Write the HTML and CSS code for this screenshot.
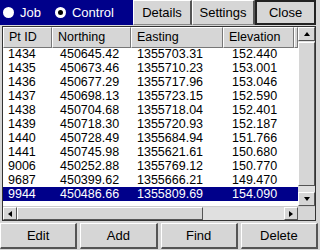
FILE: index.html
```html
<!DOCTYPE html>
<html lang="en">
<head>
    <meta charset="UTF-8">
    <meta name="viewport" content="width=device-width, initial-scale=1.0">
    <title>Control Points</title>
    <link rel="stylesheet" href="styles.css">
</head>
<body>
    <div class="topbar">
        <div class="mode">
            <label class="radio"><span class="dot"></span>Job</label>
            <label class="radio"><span class="dot checked"></span>Control</label>
        </div>
        <div class="tab">Details</div>
        <div class="tab">Settings</div>
        <div class="tab active">Close</div>
    </div>

    <div class="list">
        <div class="list-body">
            <div class="table">
                <div class="row head">
                    <div class="cell c1">Pt ID</div>
                    <div class="cell c2">Northing</div>
                    <div class="cell c3">Easting</div>
                    <div class="cell c4">Elevation</div>
                    <div class="cell c5"></div>
                </div>
                <div class="row"><div class="c1">1434</div><div class="c2">450645.42</div><div class="c3">1355703.31</div><div class="c4">152.440</div></div>
                <div class="row"><div class="c1">1435</div><div class="c2">450673.46</div><div class="c3">1355710.23</div><div class="c4">153.001</div></div>
                <div class="row"><div class="c1">1436</div><div class="c2">450677.29</div><div class="c3">1355717.96</div><div class="c4">153.046</div></div>
                <div class="row"><div class="c1">1437</div><div class="c2">450698.13</div><div class="c3">1355723.15</div><div class="c4">152.590</div></div>
                <div class="row"><div class="c1">1438</div><div class="c2">450704.68</div><div class="c3">1355718.04</div><div class="c4">152.401</div></div>
                <div class="row"><div class="c1">1439</div><div class="c2">450718.30</div><div class="c3">1355720.93</div><div class="c4">152.187</div></div>
                <div class="row"><div class="c1">1440</div><div class="c2">450728.49</div><div class="c3">1355684.94</div><div class="c4">151.766</div></div>
                <div class="row"><div class="c1">1441</div><div class="c2">450745.98</div><div class="c3">1355621.61</div><div class="c4">150.680</div></div>
                <div class="row"><div class="c1">9006</div><div class="c2">450252.88</div><div class="c3">1355769.12</div><div class="c4">150.770</div></div>
                <div class="row"><div class="c1">9687</div><div class="c2">450399.62</div><div class="c3">1355666.21</div><div class="c4">149.470</div></div>
                <div class="row selected"><div class="c1">9944</div><div class="c2">450486.66</div><div class="c3">1355809.69</div><div class="c4">154.090</div></div>
            </div>
            <div class="vscroll">
                <div class="arrow"><span class="tri up"></span></div>
                <div class="vthumb"></div>
                <div class="vtrack"></div>
                <div class="arrow"><span class="tri down"></span></div>
            </div>
        </div>
        <div class="hscroll">
            <div class="arrow h"><span class="tri left"></span></div>
            <div class="hthumb"></div>
            <div class="htrack"></div>
            <div class="arrow h"><span class="tri right"></span></div>
            <div class="corner"></div>
        </div>
    </div>

    <div class="buttons">
        <button class="btn">Edit</button>
        <button class="btn">Add</button>
        <button class="btn">Find</button>
        <button class="btn">Delete</button>
    </div>
</body>
</html>
```

FILE: styles.css
```css
body {
    margin: 0;
    width: 320px;
    height: 250px;
    overflow: hidden;
    background: #d6d6d6;
    font-family: "Liberation Sans", Arial, sans-serif;
    font-size: 12.5px;
    color: #000;
}

.topbar {
    display: flex;
    height: 25px;
}

.mode {
    width: 133px;
    background: #00008a;
    color: #fff;
    font-size: 13px;
    display: flex;
    align-items: center;
    padding-left: 3px;
    box-sizing: border-box;
}

.radio {
    display: flex;
    align-items: center;
    margin-right: 14px;
}

.dot {
    width: 11px;
    height: 11px;
    border-radius: 50%;
    background: #fff;
    margin-right: 6px;
    position: relative;
}

.dot.checked::after {
    content: "";
    position: absolute;
    left: 3px;
    top: 3px;
    width: 5px;
    height: 5px;
    border-radius: 50%;
    background: #000;
}

.tab {
    font-size: 13px;
    display: flex;
    align-items: center;
    justify-content: center;
    background: #d6d6d6;
    border-top: 1px solid #fff;
    border-left: 1px solid #fff;
    border-right: 2px solid #555;
    border-bottom: 1px solid #888;
    box-sizing: border-box;
}

.tab:nth-child(2) { width: 59px; }
.tab:nth-child(3) { width: 63px; }

.tab.active {
    width: 61px;
    border: 2px solid #222;
}

.list {
    margin: 1px 4px 0 2px;
    border: 1px solid #333;
    background: #fff;
}

.list-body {
    display: flex;
    height: 179px;
}

.table {
    flex: 1;
}

.row {
    display: grid;
    grid-template-columns: 49px 79px 92px 71px 1fr;
    height: 14px;
    line-height: 14px;
    white-space: nowrap;
}

.row.head {
    height: 19px;
    line-height: 19px;
    margin-bottom: 1px;
}

.head .cell {
    background: #d6d6d6;
    border-top: 1px solid #fff;
    border-left: 1px solid #fff;
    border-right: 1px solid #777;
    border-bottom: 1px solid #777;
    padding-left: 4px;
    box-sizing: border-box;
}

.head .c5 { padding: 0; }

.row .c1 { padding-left: 5px; }
.row .c2 { padding-left: 8px; }
.row .c3 { padding-left: 6px; }
.row .c4 { padding-left: 9px; }

.head .c2 { padding-left: 5px; }
.head .c3 { padding-left: 5px; }
.head .c4 { padding-left: 5px; }

.row.selected {
    background: #00008a;
    color: #fff;
}

.vscroll {
    width: 17px;
    background: #e0e0e0;
    display: flex;
    flex-direction: column;
}

.arrow {
    height: 14px;
    background: #d6d6d6;
    border-top: 1px solid #fff;
    border-left: 1px solid #fff;
    border-right: 1px solid #555;
    border-bottom: 1px solid #555;
    box-sizing: border-box;
    display: flex;
    align-items: center;
    justify-content: center;
    flex: none;
}

.arrow.h {
    width: 14px;
    height: 13px;
}

.vthumb {
    flex: 1;
    background: #d6d6d6;
    border-top: 1px solid #fff;
    border-left: 1px solid #fff;
    border-right: 1px solid #555;
    border-bottom: 1px solid #555;
    margin-top: 1px;
}

.vtrack {
    height: 6px;
}

.tri {
    width: 0;
    height: 0;
    border: 3px solid transparent;
}

.tri.up { border-bottom: 4px solid #000; border-top: 0; }
.tri.down { border-top: 4px solid #000; border-bottom: 0; }
.tri.left { border-right: 4px solid #000; border-left: 0; }
.tri.right { border-left: 4px solid #000; border-right: 0; }

.hscroll {
    display: flex;
    height: 13px;
    background: #e0e0e0;
    border-top: 1px solid #ccc;
}

.hthumb {
    width: 186px;
    background: #d6d6d6;
    border-top: 1px solid #fff;
    border-left: 1px solid #fff;
    border-right: 1px solid #555;
    border-bottom: 1px solid #555;
    box-sizing: border-box;
}

.htrack {
    flex: 1;
}

.corner {
    width: 17px;
    background: #d6d6d6;
}

.buttons {
    display: flex;
    gap: 3px;
    margin-top: 2px;
    padding-right: 2px;
}

.btn {
    flex: 1;
    height: 26px;
    font-family: "Liberation Sans", Arial, sans-serif;
    font-size: 13px;
    background: #d6d6d6;
    border-top: 1px solid #fff;
    border-left: 1px solid #fff;
    border-right: 2px solid #555;
    border-bottom: 2px solid #555;
    padding: 0;
}
```
